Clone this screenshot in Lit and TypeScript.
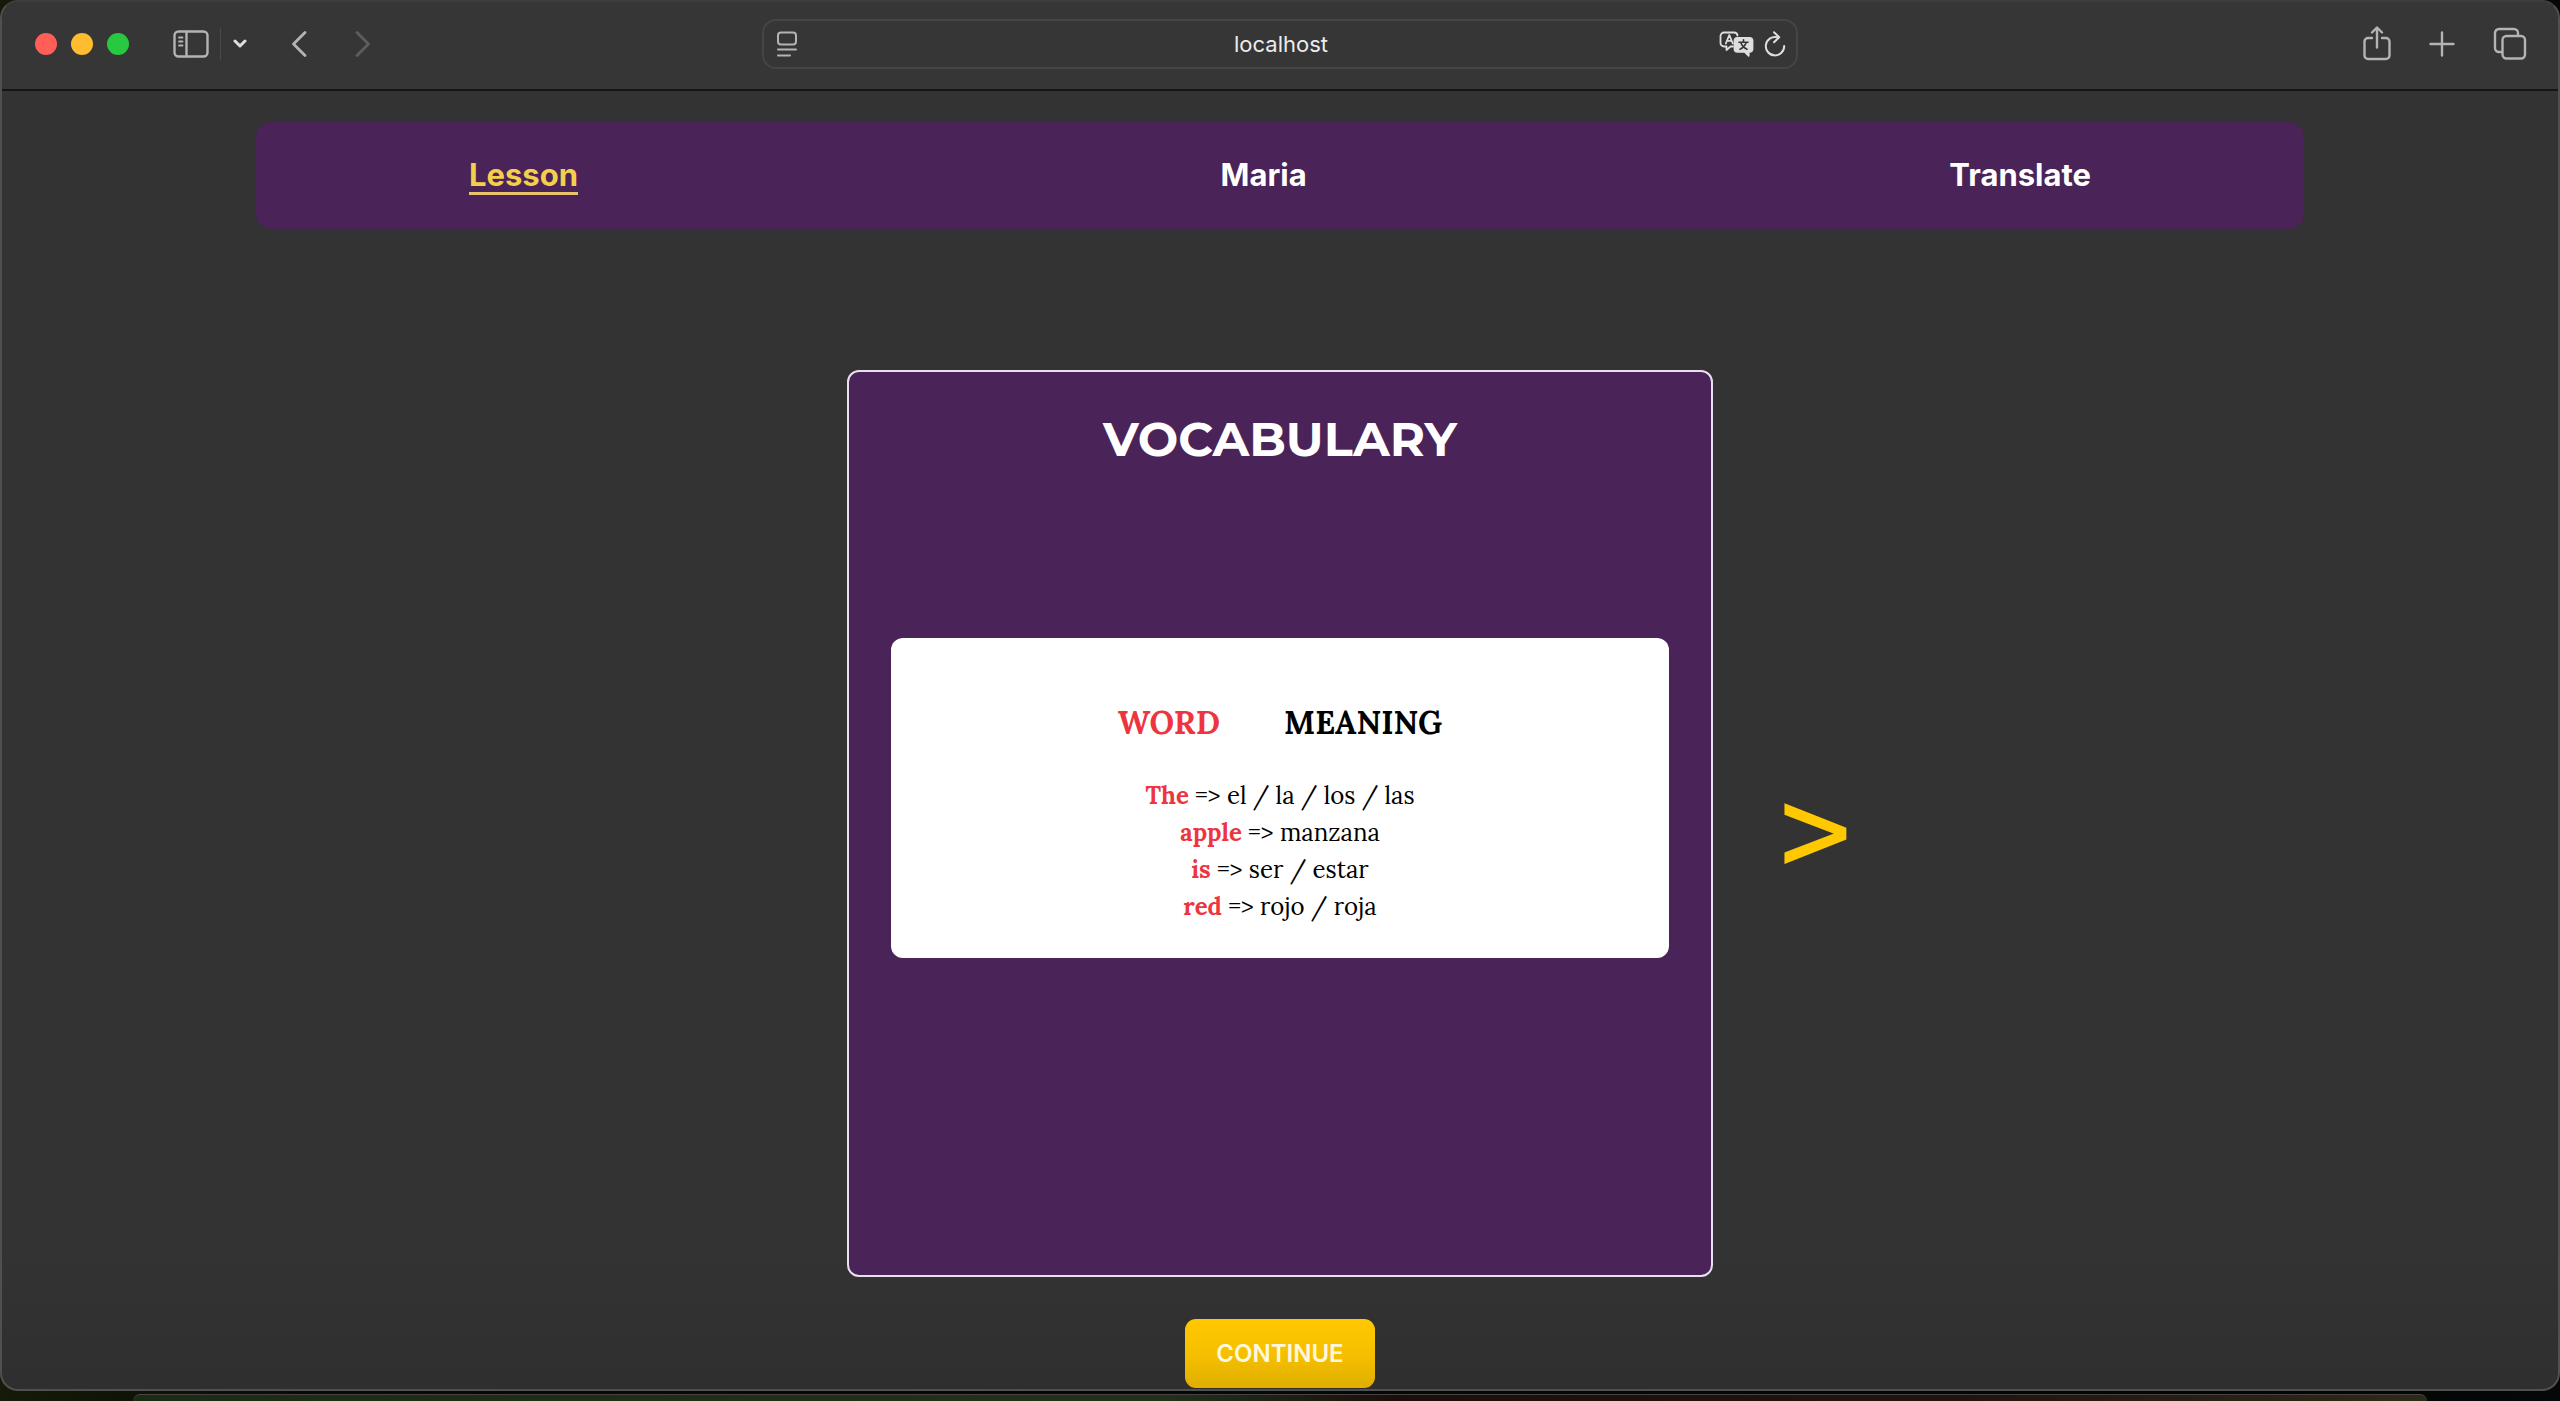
import { LitElement, html, css } from "lit";
import { customElement, state } from "lit/decorators.js";
import { classMap } from "lit/directives/class-map.js";

@customElement("browser-toolbar")
class BrowserToolbar extends LitElement {
  static styles = css`
    :host {
      display: block;
      font-family: Inter, "Liberation Sans", sans-serif;
    }
    .bar {
      display: grid;
      grid-template-columns: 1fr 1036px 1fr;
      align-items: center;
      box-sizing: border-box;
      height: 89px;
      padding-bottom: 4px;
      background: #363636;
      border-bottom: 2px solid #151515;
    }
    .side {
      display: flex;
      align-items: center;
    }
    .left {
      padding-left: 33px;
    }
    .right {
      justify-content: flex-end;
      gap: 38px;
      padding-right: 31px;
    }
    .lights {
      display: flex;
      gap: 14px;
      margin-right: 44px;
    }
    .light {
      width: 22px;
      height: 22px;
      padding: 0;
      border: 0;
      border-radius: 50%;
    }
    .close {
      background: #ff5f57;
    }
    .minimize {
      background: #febc2e;
    }
    .zoom {
      background: #28c840;
    }
    .icon {
      display: flex;
      padding: 0;
      border: 0;
      background: none;
      color: #b4b4b4;
    }
    .bright {
      color: #dedede;
    }
    .dim {
      color: #5e5e5e;
    }
    .rule {
      width: 1px;
      height: 32px;
      margin: 0 12px 0 11px;
      background: #4a4a4a;
    }
    .back {
      margin-left: 44px;
      margin-right: 48px;
    }
    .address {
      display: flex;
      align-items: center;
      box-sizing: border-box;
      height: 50px;
      padding: 0 10px 0 13px;
      border: 2px solid #454545;
      border-radius: 14px;
    }
    .url {
      flex: 1;
      min-width: 0;
      padding: 0 0 0 46px;
      border: 0;
      background: none;
      color: #ececec;
      font: 400 22px Inter, "Liberation Sans", sans-serif;
      text-align: center;
      outline: none;
    }
    .translate {
      margin-right: 10px;
    }
    svg {
      display: block;
      fill: none;
      stroke: currentColor;
      stroke-width: 2.4;
      stroke-linecap: round;
      stroke-linejoin: round;
    }
  `;

  render() {
    return html`
      <header class="bar">
        <div class="side left">
          <div class="lights">
            <button class="light close" aria-label="Close"></button>
            <button class="light minimize" aria-label="Minimize"></button>
            <button class="light zoom" aria-label="Zoom"></button>
          </div>
          <button class="icon" aria-label="Sidebar">
            <svg width="36" height="28" viewBox="0 0 36 28">
              <rect x="1.5" y="1.5" width="33" height="25" rx="4"></rect>
              <path d="M13.5 2v24"></path>
              <path stroke-width="1.8" d="M6 7.5h3.5M6 11.5h3.5M6 15.5h3.5"></path>
            </svg>
          </button>
          <span class="rule"></span>
          <button class="icon bright" aria-label="Tab groups">
            <svg width="14" height="10" viewBox="0 0 14 10">
              <path stroke-width="3" d="M2 2l5 5 5-5"></path>
            </svg>
          </button>
          <button class="icon back" aria-label="Back">
            <svg width="16" height="28" viewBox="0 0 16 28">
              <path stroke-width="2.8" d="M14 2.5L2.5 14 14 25.5"></path>
            </svg>
          </button>
          <button class="icon dim" aria-label="Forward">
            <svg width="16" height="28" viewBox="0 0 16 28">
              <path stroke-width="2.8" d="M2 2.5L13.5 14 2 25.5"></path>
            </svg>
          </button>
        </div>
        <div class="address">
          <button class="icon" aria-label="Page menu">
            <svg width="20" height="26" viewBox="0 0 20 26">
              <g stroke-width="2">
                <rect x="1" y="1.5" width="18" height="12" rx="3"></rect>
                <path d="M1 18.5h18M1 24.5h12"></path>
              </g>
            </svg>
          </button>
          <input class="url" aria-label="Address" .value=${"localhost"} />
          <button class="icon bright translate" aria-label="Translate page">
            <svg width="35" height="26" viewBox="0 0 35 26">
              <g stroke-width="1.8">
                <path d="M14 15.5h-2.5l-4 3.5v-3.5H5A3.5 3.5 0 0 1 1.5 12V5A3.5 3.5 0 0 1 5 1.5h10A3.5 3.5 0 0 1 18.5 4.5"></path>
                <path d="M6.8 12.5l3.5-8.500 3.5 8.500M8 9.800h4.600"></path>
                <path fill="currentColor" d="M18.500 6.800h12a3 3 0 0 1 3 3v8a3 3 0 0 1-3 3h-.8v4l-4-4h-7.200a3 3 0 0 1-3-3v-8a3 3 0 0 1 3-3z"></path>
                <path stroke="#363636" stroke-width="1.6" d="M24.500 8.800v2M20 11.200h9M21.800 11.500c1 3 3 5.300 6.200 6.700M27.200 11.500c-1 3-3 5.300-6.200 6.700"></path>
              </g>
            </svg>
          </button>
          <button class="icon bright" aria-label="Reload">
            <svg width="22" height="26" viewBox="0 0 22 26">
              <g stroke-width="2">
                <path d="M13 6.200A9.200 9.200 0 1 0 20.200 15"></path>
                <path d="M10 1.200l5.200 5-5.200 5"></path>
              </g>
            </svg>
          </button>
        </div>
        <div class="side right">
          <button class="icon" aria-label="Share">
            <svg width="28" height="36" viewBox="0 0 28 36">
              <path d="M9 12H5a3.500 3.500 0 0 0-3.500 3.500v14A3.500 3.500 0 0 0 5 33h18a3.500 3.500 0 0 0 3.500-3.500v-14A3.500 3.500 0 0 0 23 12h-4"></path>
              <path d="M14 21.500V2M9 6.500l5-5 5 5"></path>
            </svg>
          </button>
          <button class="icon" aria-label="New tab">
            <svg width="26" height="26" viewBox="0 0 26 26">
              <path d="M13 1.500v23M1.500 13h23"></path>
            </svg>
          </button>
          <button class="icon" aria-label="Tab overview">
            <svg width="34" height="34" viewBox="0 0 34 34">
              <rect x="9.500" y="9" width="22.500" height="22.500" rx="4"></rect>
              <path d="M9 25H6a4 4 0 0 1-4-4V6a4 4 0 0 1 4-4h15a4 4 0 0 1 4 4v2.500"></path>
            </svg>
          </button>
        </div>
      </header>
    `;
  }
}

interface Entry {
  word: string;
  meaning: string;
}

@customElement("vocabulary-card")
class VocabularyCard extends LitElement {
  private entries: Entry[] = [
    { word: "The", meaning: "el / la / los / las" },
    { word: "apple", meaning: "manzana" },
    { word: "is", meaning: "ser / estar" },
    { word: "red", meaning: "rojo / roja" },
  ];

  static styles = css`
    :host {
      display: block;
      box-sizing: border-box;
      padding: 37px 42px;
      border: 2px solid #eadff0;
      border-radius: 12px;
      background: #4a2359;
    }
    .title {
      margin: 0 0 169px;
      color: #ffffff;
      font: 700 48px/60px Montserrat, Inter, sans-serif;
      text-align: center;
    }
    .sheet {
      padding: 63px 24px 33px;
      border-radius: 12px;
      background: #ffffff;
      color: #000000;
      font-family: Lora, "Liberation Serif", serif;
    }
    .heads {
      display: flex;
      justify-content: center;
      gap: 64px;
      margin-bottom: 32px;
    }
    .head {
      margin: 0;
      font-size: 32px;
      line-height: 44px;
      font-weight: 700;
    }
    .list {
      margin: 0;
      padding: 0;
      list-style: none;
      text-align: center;
      font-size: 24px;
      line-height: 37px;
    }
    .word {
      color: #ee353f;
    }
  `;

  render() {
    return html`
      <h1 class="title">VOCABULARY</h1>
      <section class="sheet">
        <div class="heads">
          <h2 class="head word">WORD</h2>
          <h2 class="head">MEANING</h2>
        </div>
        <ul class="list">
          ${this.entries.map(
            (e) => html`<li><strong class="word">${e.word}</strong> =&gt; ${e.meaning}</li>`
          )}
        </ul>
      </section>
    `;
  }
}

@customElement("app-root")
class AppRoot extends LitElement {
  @state() private active = "Lesson";

  static styles = css`
    :host {
      display: flex;
      flex-direction: column;
      min-height: 100vh;
      background: linear-gradient(90deg, #161a08, #070a07 12%, #050505 88%, #050708);
      font-family: Inter, "Liberation Sans", sans-serif;
    }
    .window {
      flex: 1;
      display: flex;
      flex-direction: column;
      border: 2px solid #505050;
      border-top-color: #3e3e3e;
      border-radius: 18px;
      overflow: hidden;
      background: linear-gradient(#333333 90%, #2f2f2f);
    }
    .nav {
      display: flex;
      justify-content: space-between;
      align-items: center;
      box-sizing: border-box;
      width: 80vw;
      height: 107px;
      margin: 31px auto 0;
      padding: 0 213px;
      border-radius: 15px;
      background: #4a2359;
    }
    .link {
      border-bottom: 3px solid transparent;
      color: #ffffff;
      font-size: 31px;
      line-height: 35px;
      font-weight: 700;
      text-decoration: none;
    }
    .current {
      border-color: #eac36a;
      color: #f3cf4c;
    }
    .stage {
      flex: 1;
      display: grid;
      grid-template-columns: 1fr 33.9% 1fr;
      margin-top: 141px;
    }
    .card {
      grid-column: 2;
    }
    .next {
      justify-self: start;
      align-self: center;
      margin-left: 62px;
      padding: 18px 0 0;
      border: 0;
      background: none;
      color: #ffc800;
      font: 500 138px Montserrat, "Liberation Sans", sans-serif;
    }
    .continue {
      align-self: center;
      height: 69px;
      margin: 42px 0 1px;
      padding: 0 31px;
      border: 0;
      border-radius: 11px;
      background: linear-gradient(#ffc800, #f6c000 50%, #e0ae00);
      color: #fff8dc;
      font: 600 24px Inter, "Liberation Sans", sans-serif;
    }
    .dock {
      height: 6px;
      margin: 3px 133px 0;
      border-top: 1px solid #444444;
      border-radius: 24px 24px 0 0;
      background: linear-gradient(90deg, #1c2b14, #23301a 45%, #1c0e0a 55%, #24120e 80%, #2e2a18);
    }
  `;

  render() {
    return html`
      <main class="window">
        <browser-toolbar></browser-toolbar>
        <nav class="nav">
          ${["Lesson", "Maria", "Translate"].map(
            (name) => html`<a
              class=${classMap({ link: true, current: name === this.active })}
              href="#${name.toLowerCase()}"
              @click=${() => (this.active = name)}
              >${name}</a
            >`
          )}
        </nav>
        <div class="stage">
          <vocabulary-card class="card"></vocabulary-card>
          <button class="next" aria-label="Next">&gt;</button>
        </div>
        <button class="continue">CONTINUE</button>
      </main>
      <div class="dock"></div>
    `;
  }
}
